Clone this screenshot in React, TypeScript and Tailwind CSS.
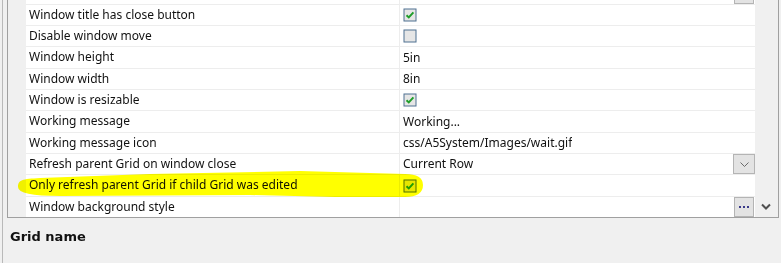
import React from "react";

type Row = {
  name: string;
  value?: string;
  check?: boolean;
  kind?: "text" | "check" | "select" | "dots";
};

const rows: Row[] = [
  { name: "", kind: "dots" },
  { name: "Window title has close button", kind: "check", check: true },
  { name: "Disable window move", kind: "check", check: false },
  { name: "Window height", value: "5in" },
  { name: "Window width", value: "8in" },
  { name: "Window is resizable", kind: "check", check: true },
  { name: "Working message", value: "Working..." },
  { name: "Working message icon", value: "css/A5System/Images/wait.gif" },
  { name: "Refresh parent Grid on window close", value: "Current Row", kind: "select" },
  { name: "Only refresh parent Grid if child Grid was edited", kind: "check", check: true },
  { name: "Window background style", kind: "dots" },
];

function CheckBox({ checked }: { checked: boolean }) {
  return (
    <svg width="14" height="14" viewBox="0 0 14 14" className="shrink-0">
      <rect x="0.5" y="0.5" width="13" height="13" fill="#4f7191" />
      <rect x="1.5" y="1.5" width="11" height="11" fill="#e6e6e6" />
      {checked && (
        <path d="M3.5 7.2 L5.8 9.4 L10.4 4.4" fill="none" stroke="#1f9e2a" strokeWidth="2" />
      )}
    </svg>
  );
}

function SelectButton() {
  return (
    <div className="ml-auto flex h-full w-[22px] items-center justify-center border border-[#b4b4b4] bg-[#e3e3e3]">
      <svg width="9" height="5" viewBox="0 0 9 5">
        <path d="M0.5 0.5 L4.5 4.5 L8.5 0.5" fill="none" stroke="#6a6a6a" strokeWidth="1" />
      </svg>
    </div>
  );
}

function DotsButton() {
  return (
    <div className="ml-auto mr-[1px] flex h-full w-[20px] items-center justify-center gap-[2px] border border-[#b4b4b4] bg-[#e3e3e3]">
      <span className="h-[2px] w-[2px] bg-[#3b3b8a]" />
      <span className="h-[2px] w-[2px] bg-[#3b3b8a]" />
      <span className="h-[2px] w-[2px] bg-[#3b3b8a]" />
    </div>
  );
}

export default function App() {
  return (
    <div
      className="relative h-[263px] w-[781px] overflow-hidden bg-[#f0f0f0] text-[#111]"
      style={{ fontFamily: '"Noto Sans", "Liberation Sans", sans-serif' }}
    >
      <div className="ml-[2px] h-full border-l border-[#b9b9b9] pl-[4px]">
        {/* property grid */}
        <div className="flex h-[218px] w-[772px] border-b border-l border-r border-[#a0a0a0] bg-[#f0f0f0]">
          <div className="w-[18px] shrink-0" />
          <div className="flex w-[729px] flex-col justify-end overflow-hidden bg-white">
            {rows.map((row, i) => (
              <div
                key={i}
                className="flex h-[21.33px] shrink-0 border-t border-[#ededed] text-[12px] leading-[20px]"
              >
                <div className="w-[374px] shrink-0 truncate border-r border-[#ededed] pl-[3px]">
                  {row.name}
                </div>
                <div className="flex min-w-0 flex-1 items-center pl-[3px]">
                  {row.kind === "check" && <CheckBox checked={!!row.check} />}
                  {row.value && <span className="truncate">{row.value}</span>}
                  {row.kind === "select" && <SelectButton />}
                  {row.kind === "dots" && <DotsButton />}
                </div>
              </div>
            ))}
          </div>
          <div className="flex w-[22px] shrink-0 flex-col justify-end">
            <div className="mb-[1px] flex h-[20px] items-center justify-center">
              <svg width="10" height="7" viewBox="0 0 10 7">
                <path d="M1 1.5 L5 5.5 L9 1.5" fill="none" stroke="#505050" strokeWidth="2" />
              </svg>
            </div>
          </div>
        </div>

        <div
          className="mt-[10px] pl-[3px] text-[13px] font-bold leading-[18px] text-[#111]"
          style={{ fontFamily: '"DejaVu Sans", "Liberation Sans", sans-serif' }}
        >
          Grid name
        </div>
      </div>

      {/* highlighter stroke */}
      <svg
        className="pointer-events-none absolute left-0 top-0 mix-blend-multiply"
        width="781"
        height="263"
        viewBox="0 0 781 263"
      >
        <path
          d="M18 187 C18 180 22 179 40 178 L150 174 L300 171 L405 174 Q423 174 423 185 Q423 197 405 197 L335 197 L250 195 L60 196 Q18 196 18 187 Z"
          fill="#ffff00"
        />
      </svg>
    </div>
  );
}
